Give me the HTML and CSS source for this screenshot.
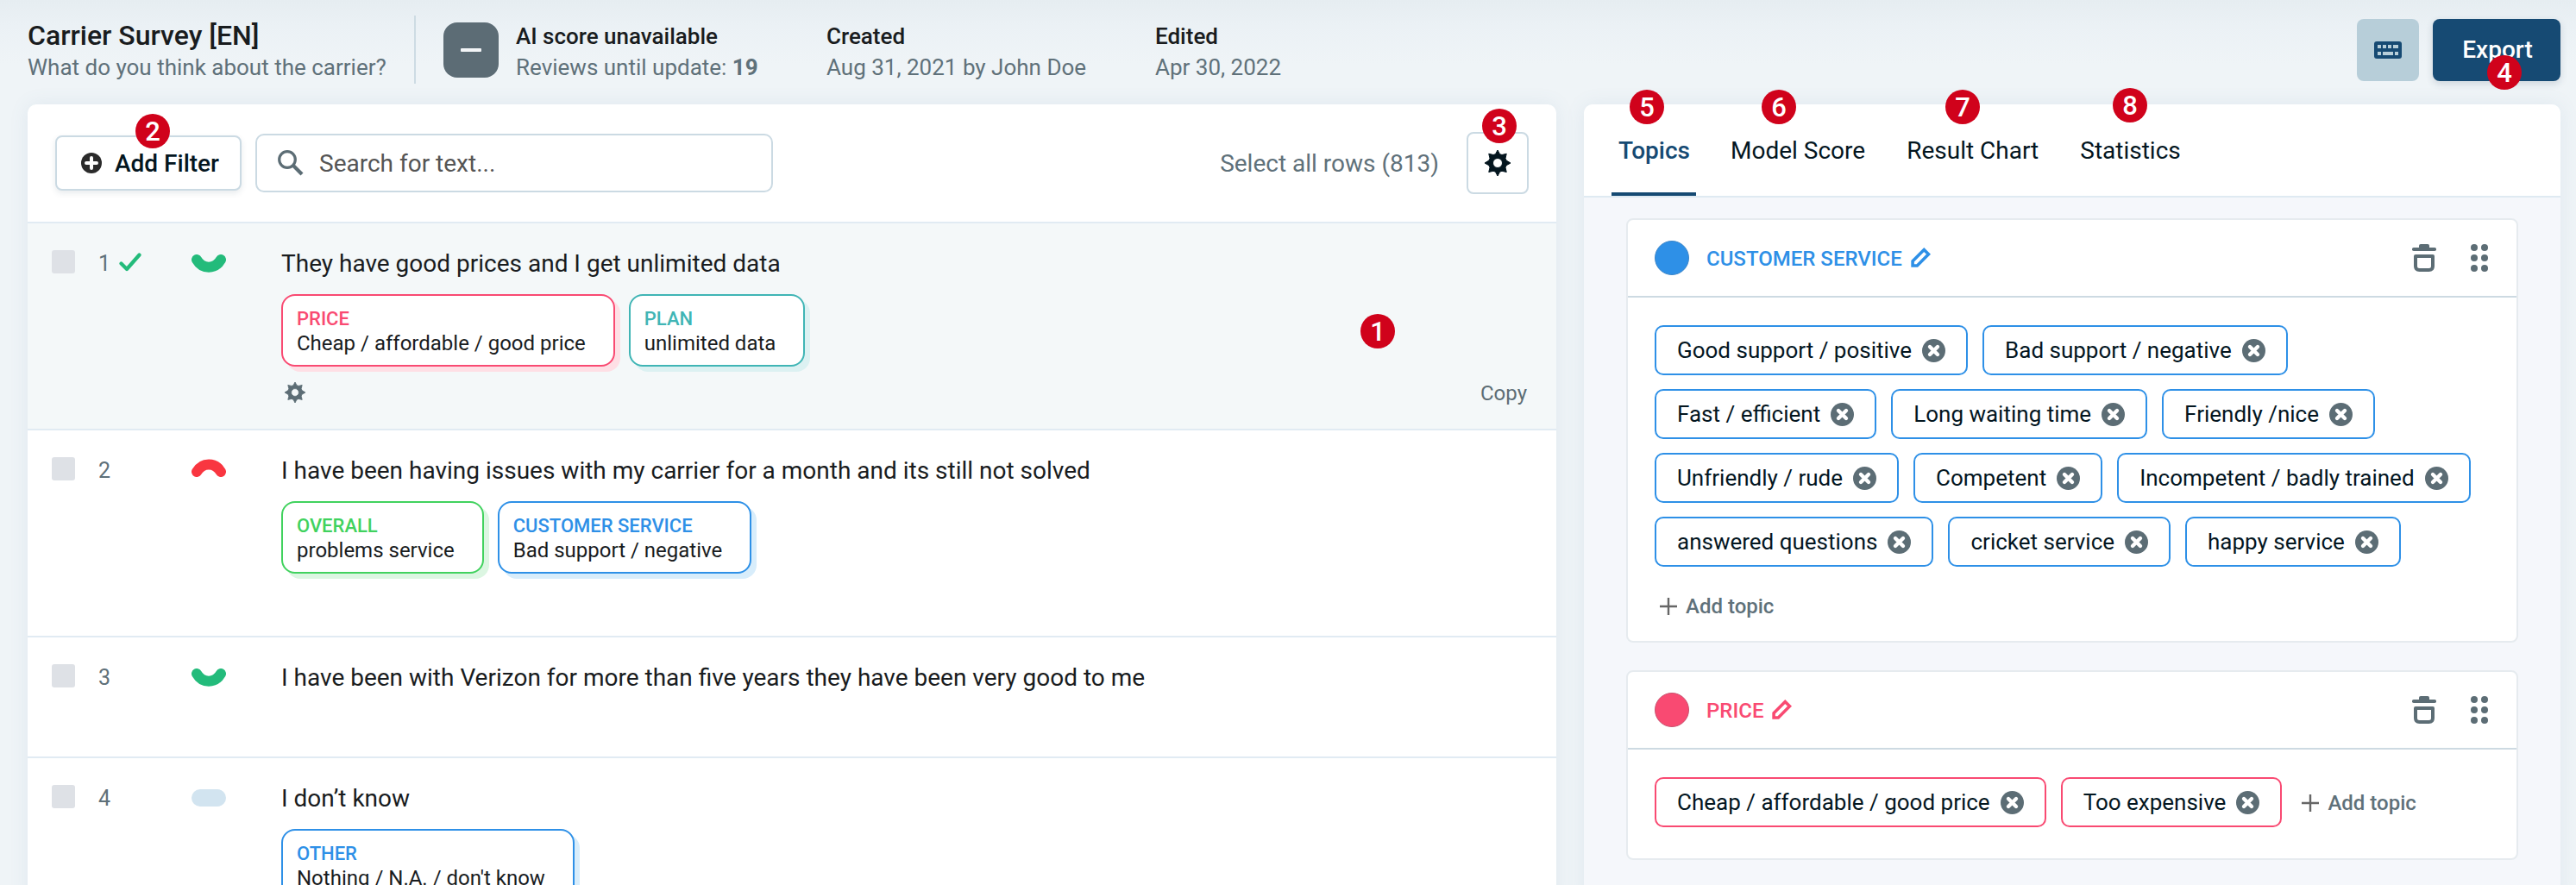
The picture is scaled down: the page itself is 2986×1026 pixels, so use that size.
FILE: index.html
```html
<!DOCTYPE html>
<html lang="en">
<head>
<meta charset="utf-8">
<title>Carrier Survey [EN]</title>
<link rel="stylesheet" href="styles.css">
</head>
<body>
<svg class="sprite" aria-hidden="true">
  <symbol id="i-gear" viewBox="0 0 24 24">
    <path fill-rule="evenodd" d="M12 0l2 3.700 2 .7 4.200-1-1 4.200.8 2L24 12l-4 2.200-.8 2 1 4.200-4.200-1-2 .8L12 24l-2-3.800-2-.8-4.200 1 1-4.200-.8-2L0 12l4-2.400.8-2-1-4.200 4.200 1 2-.7zM12 7.600a4.400 4.400 0 1 0 0 8.800a4.400 4.400 0 0 0 0-8.800z" stroke="currentColor" stroke-width=".8" stroke-linejoin="round"/>
  </symbol>
  <symbol id="i-smile" viewBox="0 0 40 21">
    <path d="M6 6C12.500 17.500 27.500 17.500 34 6" fill="none" stroke="currentColor" stroke-width="12" stroke-linecap="round"/>
  </symbol>
  <symbol id="i-close" viewBox="0 0 27 27">
    <circle cx="13.500" cy="13.500" r="13.500"/>
    <path d="M9 9l9 9M18 9l-9 9" stroke="#fff" stroke-width="4.400" stroke-linecap="round"/>
  </symbol>
  <symbol id="i-trash" viewBox="0 0 28 32">
    <rect y="4" width="28" height="4" rx="1.800"/>
    <path d="M8 5V2q0-2 2-2h8q2 0 2 2v3z"/>
    <path d="M4 14h20v11.500q0 4.500-4.500 4.500h-11q-4.500 0-4.500-4.500z" fill="none" stroke="currentColor" stroke-width="4" stroke-linejoin="round"/>
  </symbol>
  <symbol id="i-drag" viewBox="0 0 20 32">
    <circle cx="4" cy="4" r="4"/><circle cx="16" cy="4" r="4"/>
    <circle cx="4" cy="16" r="4"/><circle cx="16" cy="16" r="4"/>
    <circle cx="4" cy="28" r="4"/><circle cx="16" cy="28" r="4"/>
  </symbol>
  <symbol id="i-pencil" viewBox="0 0 22 22">
    <path d="M2 20v-5L14.600 2.400l5 5L7 20z" fill="none" stroke="currentColor" stroke-width="3.400"/>
  </symbol>
  <symbol id="i-plus" viewBox="0 0 20 20">
    <path d="M10 0v20M0 10h20" fill="none" stroke="#666" stroke-width="2.400"/>
  </symbol>
</svg>

<header class="topbar">
  <div class="survey">
    <h1 class="survey-title">Carrier Survey [EN]</h1>
    <p class="muted">What do you think about the carrier?</p>
  </div>
  <div class="score-box"><span class="dash"></span></div>
  <div class="meta meta-score">
    <p class="strong">AI score unavailable</p>
    <p class="muted">Reviews until update: <b>19</b></p>
  </div>
  <div class="meta meta-created">
    <p class="strong">Created</p>
    <p class="muted">Aug 31, 2021 by John Doe</p>
  </div>
  <div class="meta">
    <p class="strong">Edited</p>
    <p class="muted">Apr 30, 2022</p>
  </div>
  <div class="actions">
    <button class="keyboard-btn" aria-label="Keyboard shortcuts">
      <svg width="32" height="20" viewBox="0 0 32 20">
        <rect width="32" height="20" rx="3"/>
        <path d="M4 4h4v4H4zM10 4h4v4h-4zM16 4h4v4h-4zM22 4h6v4h-6zM4 12h4v4H4zM10 12h12v4H10zM24 12h4v4h-4z" fill="#b7ced9"/>
      </svg>
    </button>
    <button class="export-btn">Export</button>
  </div>
</header>

<main class="columns">
  <section class="panel reviews">
    <div class="toolbar">
      <button class="filter-btn">
        <svg width="24" height="24" viewBox="0 0 24 24"><circle cx="12" cy="12" r="12" fill="#2b2b2b"/><path d="M12 6v12M6 12h12" stroke="#fff" stroke-width="4" stroke-linecap="round"/></svg>
        Add Filter
      </button>
      <label class="search">
        <svg class="lens" width="30" height="30" viewBox="0 0 30 30"><circle cx="11" cy="11" r="9.300" stroke-width="3.200"/><path d="M17.800 17.800L28 28" stroke-width="4.200"/></svg>
        <span>Search for text...</span>
      </label>
      <span class="select-all">Select all rows (813)</span>
      <button class="settings-btn" aria-label="Settings"><svg width="30" height="30"><use href="#i-gear"/></svg></button>
    </div>

    <article class="row active">
      <span class="checkbox"></span>
      <div class="number">1
        <svg class="check" width="26" height="22" viewBox="0 0 26 22"><path d="M2.500 12.500l6.500 6.500L23.500 2.500" fill="none" stroke="#23bb7b" stroke-width="4.200" stroke-linecap="round" stroke-linejoin="round"/></svg>
      </div>
      <svg class="mood positive" width="40" height="21"><use href="#i-smile"/></svg>
      <div class="review">
        <p class="text">They have good prices and I get unlimited data</p>
        <div class="tags">
          <div class="tag pink"><span class="tag-name">PRICE</span><span>Cheap / affordable / good price</span></div>
          <div class="tag teal"><span class="tag-name">PLAN</span><span>unlimited data</span></div>
        </div>
        <div class="row-foot"><svg width="24" height="24"><use href="#i-gear"/></svg><span>Copy</span></div>
      </div>
    </article>
    <article class="row">
      <span class="checkbox"></span>
      <div class="number">2</div>
      <svg class="mood negative" width="40" height="21"><use href="#i-smile"/></svg>
      <div class="review">
        <p class="text">I have been having issues with my carrier for a month and its still not solved</p>
        <div class="tags">
          <div class="tag green"><span class="tag-name">OVERALL</span><span>problems service</span></div>
          <div class="tag blue"><span class="tag-name">CUSTOMER SERVICE</span><span>Bad support / negative</span></div>
        </div>
      </div>
    </article>
    <article class="row short">
      <span class="checkbox"></span>
      <div class="number">3</div>
      <svg class="mood positive" width="40" height="21"><use href="#i-smile"/></svg>
      <div class="review">
        <p class="text">I have been with Verizon for more than five years they have been very good to me</p>
      </div>
    </article>
    <article class="row">
      <span class="checkbox"></span>
      <div class="number">4</div>
      <span class="mood neutral"></span>
      <div class="review">
        <p class="text">I don’t know</p>
        <div class="tags">
          <div class="tag blue"><span class="tag-name">OTHER</span><span>Nothing / N.A. / don't know</span></div>
        </div>
      </div>
    </article>
  </section>

  <aside class="panel sidebar">
    <nav class="tabs">
      <a class="tab current">Topics</a>
      <a class="tab">Model Score</a>
      <a class="tab">Result Chart</a>
      <a class="tab">Statistics</a>
    </nav>
    <div class="cards">
      <section class="card c-blue">
        <header class="card-head">
          <span class="dot"></span>
          <h2 class="card-title">CUSTOMER SERVICE</h2>
          <svg class="pencil" width="23" height="23"><use href="#i-pencil"/></svg>
          <svg class="trash" width="28" height="32"><use href="#i-trash"/></svg>
          <svg class="drag" width="20" height="32"><use href="#i-drag"/></svg>
        </header>
        <div class="chips">
          <span class="chip">Good support / positive<svg width="27" height="27"><use href="#i-close"/></svg></span>
          <span class="chip">Bad support / negative<svg width="27" height="27"><use href="#i-close"/></svg></span>
          <span class="chip">Fast / efficient<svg width="27" height="27"><use href="#i-close"/></svg></span>
          <span class="chip">Long waiting time<svg width="27" height="27"><use href="#i-close"/></svg></span>
          <span class="chip">Friendly /nice<svg width="27" height="27"><use href="#i-close"/></svg></span>
          <span class="chip">Unfriendly / rude<svg width="27" height="27"><use href="#i-close"/></svg></span>
          <span class="chip">Competent<svg width="27" height="27"><use href="#i-close"/></svg></span>
          <span class="chip">Incompetent / badly trained<svg width="27" height="27"><use href="#i-close"/></svg></span>
          <span class="chip">answered questions<svg width="27" height="27"><use href="#i-close"/></svg></span>
          <span class="chip">cricket service<svg width="27" height="27"><use href="#i-close"/></svg></span>
          <span class="chip">happy service<svg width="27" height="27"><use href="#i-close"/></svg></span>
          <span class="add-topic"><svg width="20" height="20"><use href="#i-plus"/></svg>Add topic</span>
        </div>
      </section>
      <section class="card c-pink">
        <header class="card-head">
          <span class="dot"></span>
          <h2 class="card-title">PRICE</h2>
          <svg class="pencil" width="23" height="23"><use href="#i-pencil"/></svg>
          <svg class="trash" width="28" height="32"><use href="#i-trash"/></svg>
          <svg class="drag" width="20" height="32"><use href="#i-drag"/></svg>
        </header>
        <div class="chips">
          <span class="chip">Cheap / affordable / good price<svg width="27" height="27"><use href="#i-close"/></svg></span>
          <span class="chip">Too expensive<svg width="27" height="27"><use href="#i-close"/></svg></span>
          <span class="add-topic"><svg width="20" height="20"><use href="#i-plus"/></svg>Add topic</span>
        </div>
      </section>
    </div>
  </aside>
</main>

<span class="badge b1">1</span>
<span class="badge b2">2</span>
<span class="badge b3">3</span>
<span class="badge b4">4</span>
<span class="badge b5">5</span>
<span class="badge b6">6</span>
<span class="badge b7">7</span>
<span class="badge b8">8</span>
</body>
</html>
```
FILE: styles.css
```css
* { box-sizing: border-box; }
body {
  margin: 0;
  width: 2986px;
  height: 1026px;
  overflow: hidden;
  position: relative;
  font-family: Roboto, "Liberation Sans", sans-serif;
  font-size: 26px;
  color: #191c1e;
  background: linear-gradient(#e6edf1 0, #ebf1f5 30px, #eff4f7 75px);
}
h1, h2, p { margin: 0; font-weight: 500; }
button { font: inherit; margin: 0; padding: 0; cursor: pointer; }
svg { display: block; flex: none; fill: currentColor; }
.sprite { position: absolute; width: 0; height: 0; }

/* Top bar */
.topbar { display: flex; align-items: flex-start; height: 121px; padding: 18px 18px 0 0; line-height: 36px; }
.survey { width: 482px; height: 79px; padding: 5px 0 0 32px; border-right: 2px solid #cddbe3; }
.survey-title { font-size: 32px; line-height: 37px; }
.muted { color: #5f717a; font-weight: 400; }
.muted b { font-weight: 700; }
.strong { font-weight: 500; }
.score-box { display: flex; align-items: center; justify-content: center; width: 64px; height: 64px; margin: 8px 20px 0 32px; border-radius: 16px; background: #5c6c75; }
.dash { width: 24px; height: 4px; border-radius: 1px; background: #f3f5f7; }
.meta { padding-top: 6px; }
.meta-score { width: 360px; }
.meta-created { width: 381px; }
.actions { display: flex; gap: 16px; margin: 4px 0 0 auto; }
.keyboard-btn, .export-btn { display: flex; align-items: center; justify-content: center; height: 72px; border: 0; border-radius: 8px; }
.keyboard-btn { width: 72px; background: #b7ced9; color: #164a73; }
.export-btn { width: 148px; padding-left: 2px; background: #164a73; color: #fff; font-size: 28px; font-weight: 500; box-shadow: 0 3px 8px rgba(22, 50, 80, .16); }

/* Panels */
.columns { display: flex; gap: 32px; padding-left: 32px; }
.panel { border-radius: 10px 10px 0 0; background: #fff; height: 925px; box-shadow: 0 0 22px rgba(90, 130, 165, .1); overflow: hidden; }
.reviews { width: 1772px; }
.sidebar { width: 1132px; background: #f5f7fb; }

/* Toolbar */
.toolbar { display: flex; align-items: center; height: 138px; padding: 0 32px; border-bottom: 2px solid #e1ebf3; font-size: 28px; }
.filter-btn { display: flex; align-items: center; gap: 15px; width: 216px; height: 64px; padding-left: 28px; border: 2px solid #cbdae3; border-radius: 8px; background: #fff; color: #04161f; font-weight: 500; white-space: nowrap; box-shadow: 0 3px 7px rgba(30, 60, 80, .1); }
.search { display: flex; align-items: center; gap: 18px; width: 600px; height: 68px; margin-left: 16px; padding-left: 24px; border: 2px solid #cbdae3; border-radius: 10px; color: #555; }
.lens { fill: none; stroke: #5c6d75; }
.select-all { margin-left: auto; margin-right: 32px; color: #5f717a; }
.settings-btn { display: flex; align-items: center; justify-content: center; width: 72px; height: 72px; border: 2px solid #cbdae3; border-radius: 8px; background: #fff; color: #04161f; }

/* Review rows */
.row { display: grid; grid-template-columns: 54px 108px 104px 1fr; align-items: start; height: 240px; padding: 27px 34px 0 28px; border-bottom: 2px solid #e1ebf3; }
.row.active { background: #f4f8f9; }
.row.short { height: 140px; }
.checkbox { width: 27px; height: 27px; margin-top: 4px; border-radius: 3px; background: #dee1e6; }
.number { display: flex; gap: 10px; line-height: 40px; color: #5f717a; font-size: 25px; }
.check { margin-top: 7px; }
.mood { margin-top: 9px; }
.positive { color: #23bb7b; }
.negative { color: #f93640; transform: scaleY(-1); margin-top: 6px; }
.neutral { width: 40px; height: 20px; border-radius: 10px; background: #d2e4f0; }
.text { font-size: 28px; line-height: 40px; font-weight: 400; }
.tags { display: flex; gap: 16px; margin-top: 15px; }
.tag { display: flex; flex-direction: column; height: 84px; padding: 13px 32px 0 16px; border: 2px solid; border-radius: 16px; background: #fff; font-size: 24px; line-height: 28px; color: #191c1e; white-space: nowrap; }
.tag-name { font-size: 22px; line-height: 28px; font-weight: 500; }
.tag.pink { border-color: #f94a72; box-shadow: 6px 6px 0 #fedfe5; }
.tag.pink .tag-name { color: #f94a72; }
.tag.teal { border-color: #40b5b5; box-shadow: 6px 6px 0 #dcf1f2; }
.tag.teal .tag-name { color: #40b5b5; }
.tag.green { border-color: #41d25e; box-shadow: 6px 6px 0 #dcf6e2; }
.tag.green .tag-name { color: #41d25e; }
.tag.blue { border-color: #2e90e7; box-shadow: 6px 6px 0 #d8edfb; }
.tag.blue .tag-name { color: #2e90e7; }
.row-foot { display: flex; align-items: center; justify-content: space-between; height: 36px; margin-top: 12px; padding-left: 4px; color: #5c6d75; font-size: 24px; }
.row-foot span { padding-top: 2px; }

/* Sidebar */
.tabs { display: flex; gap: 32px; height: 108px; padding-left: 32px; background: #fff; border-bottom: 2px solid #dfeaf2; }
.tab { height: 106px; padding: 34px 8px 0; font-size: 28px; line-height: 40px; color: #04161f; }
.tab.current { width: 98px; color: #164a73; font-weight: 500; border-bottom: 4px solid #164a73; }
.cards { display: flex; flex-direction: column; gap: 32px; padding: 24px 49px; }
.card { border: 2px solid #e6ebef; border-radius: 8px; background: #fff; }
.c-blue { --tone: #2e90e7; --rim: #3f87c9; }
.c-pink { --tone: #f94a72; --rim: #c8536f; }
.card-head { display: flex; align-items: center; height: 90px; padding: 0 33px 0 31px; border-bottom: 2px solid #cddae2; color: #5c6d75; }
.dot { width: 40px; height: 40px; border-radius: 50%; border: 1.500px solid var(--rim); background: var(--tone); }
.card-title { margin-left: 20px; padding-top: 2px; font-size: 24px; color: var(--tone); }
.pencil { margin: -2px 0 0 10px; color: var(--tone); }
.trash { margin-left: auto; }
.drag { margin-left: 40px; }
.chips { display: flex; flex-wrap: wrap; gap: 16px 17px; padding: 32px 24px 36px 31px; }
.chip { display: flex; align-items: center; gap: 12px; height: 58px; padding: 0 24px 0 24px; border: 2px solid var(--tone); border-radius: 10px; color: #04161f; white-space: nowrap; }
.chip svg { color: #5c6d75; }
.add-topic { display: flex; align-items: center; gap: 10px; height: 58px; margin-bottom: -24px; padding-left: 6px; padding-top: 1px; color: #5f717a; font-size: 24px; font-weight: 500; }

/* Numbered callouts */
.badge { position: absolute; width: 40px; height: 40px; border-radius: 50%; background: #d0021b; color: #fff; font-size: 31px; font-weight: 500; line-height: 41px; text-align: center; }
.b1 { left: 1577px; top: 364px; }
.b2 { left: 157px; top: 132px; }
.b3 { left: 1718px; top: 126px; }
.b4 { left: 2883px; top: 64px; }
.b5 { left: 1889px; top: 104px; }
.b6 { left: 2042px; top: 104px; }
.b7 { left: 2255px; top: 104px; }
.b8 { left: 2449px; top: 102px; }
```
